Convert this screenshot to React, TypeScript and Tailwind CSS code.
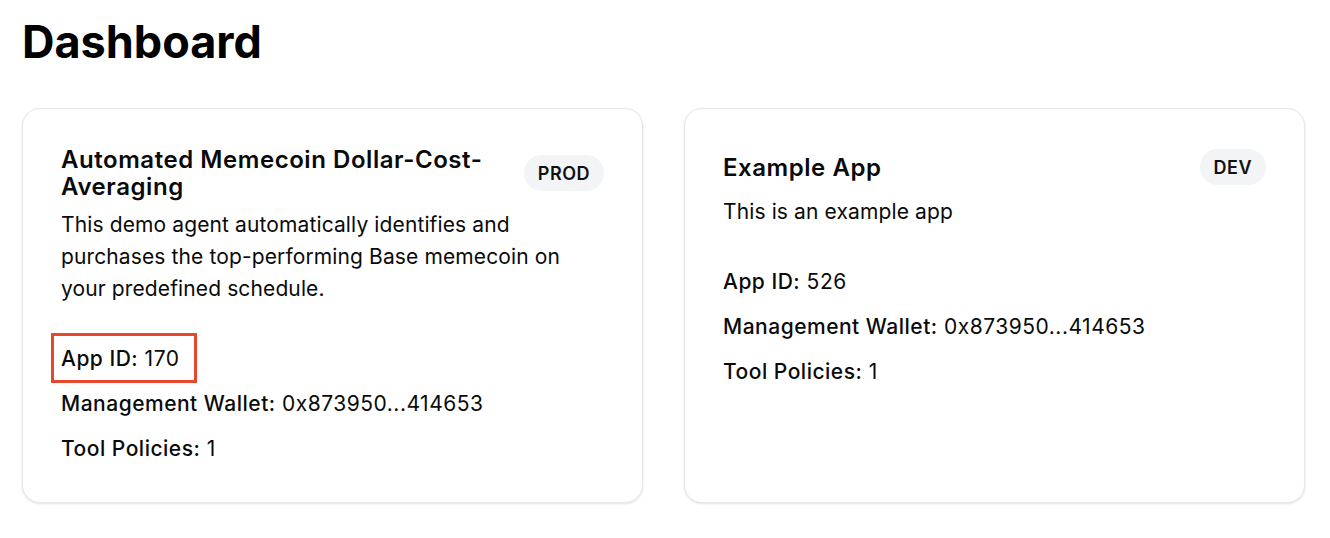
import React from "react";

type AppItem = {
  name: React.ReactNode;
  badge: string;
  description: string;
  id: string;
  wallet: string;
  policies: string;
  highlightId?: boolean;
  singleLine?: boolean;
};

const apps: AppItem[] = [
  {
    name: (
      <>
        Automated Memecoin Dollar-Cost-
        <br />
        Averaging
      </>
    ),
    badge: "PROD",
    description:
      "This demo agent automatically identifies and purchases the top-performing Base memecoin on your predefined schedule.",
    id: "170",
    wallet: "0x873950...414653",
    policies: "1",
    highlightId: true,
  },
  {
    name: "Example App",
    badge: "DEV",
    description: "This is an example app",
    id: "526",
    wallet: "0x873950...414653",
    policies: "1",
    singleLine: true,
  },
];

function Card({ app }: { app: AppItem }) {
  return (
    <div
      className={
        "rounded-[18px] border border-[#e5e7eb] bg-white pl-[38px] pr-[38px] pb-[39px] shadow-[0_1px_3px_rgba(0,0,0,0.08),0_1px_2px_rgba(0,0,0,0.04)] " +
        (app.singleLine ? "pt-[40px]" : "pt-[37px]")
      }
    >
      <div className="flex items-center justify-between gap-4">
        <h2 className="text-[24px] leading-[27px] font-semibold tracking-[0.55px] text-[#0a0a0a]">
          {app.name}
        </h2>
        <span className="flex h-[36px] shrink-0 items-center rounded-full bg-[#f3f4f6] px-[14px] text-[18px] font-semibold tracking-[0.5px] text-[#111]">
          {app.badge}
        </span>
      </div>
      <p
        className={
          "w-[530px] text-[21px] leading-[32px] tracking-[0.12px] text-[#0a0a0a] " +
          (app.singleLine ? "mt-[11px]" : "mt-[9px]")
        }
      >
        {app.description}
      </p>
      <div className="mt-[40px] flex flex-col gap-[17px] text-[21px] leading-[28px] tracking-[0.5px] text-[#0a0a0a]">
        <div className="relative self-start">
          {app.highlightId && (
            <div className="pointer-events-none absolute left-[-10px] top-[-12px] h-[50px] w-[146px] border-[3px] border-[#e8472d]" />
          )}
          <span className="font-medium">App ID:</span> {app.id}
        </div>
        <div>
          <span className="font-medium">Management Wallet:</span> {app.wallet}
        </div>
        <div>
          <span className="font-medium">Tool Policies:</span> {app.policies}
        </div>
      </div>
    </div>
  );
}

export default function App() {
  return (
    <div
      className="min-h-[538px] bg-white pl-[22px] pt-[19px]"
      style={{ fontFamily: "Inter, 'Noto Sans', sans-serif" }}
    >
      <h1 className="text-[45px] leading-[45px] font-bold tracking-[0px] text-black">
        Dashboard
      </h1>
      <div className="mt-[44px] grid w-[1283px] grid-cols-2 gap-[41px]">
        {apps.map((a) => (
          <Card key={a.badge} app={a} />
        ))}
      </div>
    </div>
  );
}
